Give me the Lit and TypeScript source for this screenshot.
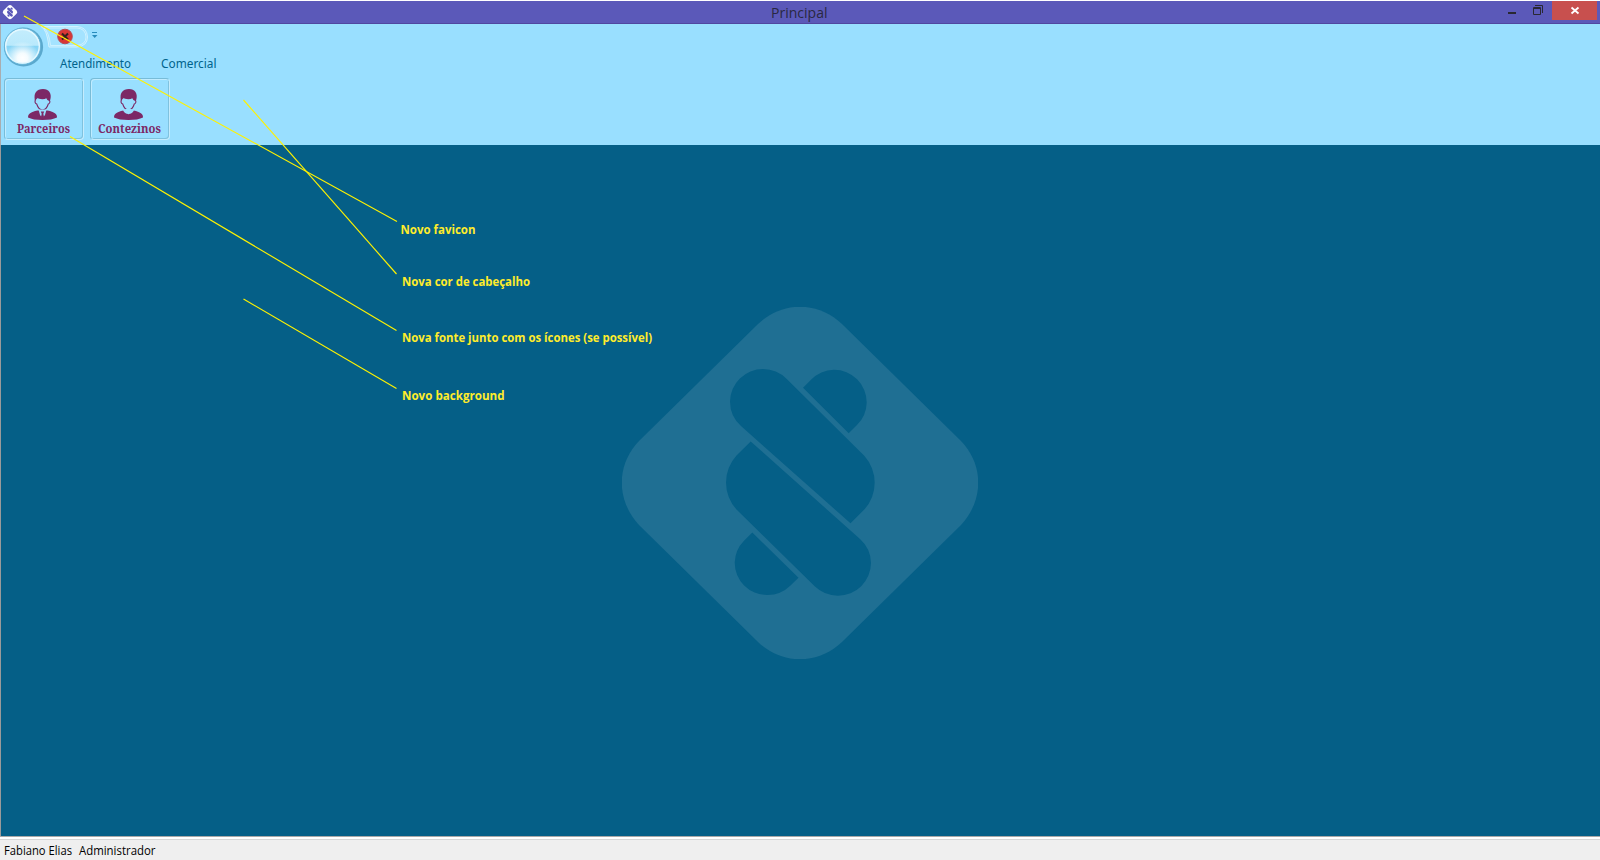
import { LitElement, html, css, svg } from "lit";
import { customElement } from "lit/decorators.js";

const notes = [
  { text: "Novo favicon", x: 400.5, y: 234, w: 75, line: [24, 16, 397, 221.5] },
  { text: "Nova cor de cabeçalho", x: 402, y: 286, w: 128, line: [243.5, 100, 396.5, 274] },
  { text: "Nova fonte junto com os ícones (se possível)", x: 402, y: 342, w: 250, line: [70, 136.5, 396.5, 330.5] },
  { text: "Novo background", x: 402, y: 400, w: 102.5, line: [243.5, 299, 396.5, 388.5] },
];

const brandBars = svg`
  <path d="M203 97.700L211 89.800A33 33 0 0 1 234 79.700A32.700 32.700 0 0 1 266.700 112.400A33 33 0 0 1 257 135L248.700 143.300Z"/>
  <path d="M186.500 88.800L264.500 166A40 40 0 0 1 264.500 219.300L250.500 233.300L141 136A33 33 0 0 1 130 111.500A33 33 0 0 1 163 79A33.500 33.500 0 0 1 186.500 88.800Z"/>
  <path d="M150.700 151.500L136.500 165.500A40 40 0 0 0 136.500 219.500L214.700 296.300A33.500 33.500 0 0 0 238 305.700A33 33 0 0 0 271 273A33 33 0 0 0 260 249Z"/>
  <path d="M152.300 242.500L144 250.700A33 33 0 0 0 134.700 272.500A32.500 32.500 0 0 0 167 305A33 33 0 0 0 190.500 295.500L198.500 287.700Z"/>`;

@customElement("ribbon-button")
class RibbonButton extends LitElement {
  static properties = { label: {}, tie: { type: Boolean }, textWidth: { type: Number } };
  declare label: string;
  declare tie: boolean;
  declare textWidth: number;
  static styles = css`
    :host { display: block; box-sizing: border-box; width: 80px; height: 62px; border: 1px solid #78bcd8; border-right-color: #c5ecfd; border-bottom-color: #c5ecfd; border-radius: 4px; box-shadow: inset 1px 1px 0 #c0ecff, inset -1px -1px 0 #7fc2df; }
    svg { display: block; overflow: visible; }
    .glyph { margin: 10px 0 0 23px; }
    text { font: bold 13px "Noto Serif", "DejaVu Serif Condensed", "DejaVu Serif", serif; fill: #7c2866; }
  `;
  render() {
    return html`
      <svg class="glyph" width="29" height="31" viewBox="0 0 29 31" fill="#7c2866">
        <path d="M0 28.500C0 24.500 2.500 23.200 9.500 21.500H19.500C26.500 23.200 29 24.500 29 28.500Q24 31 14.500 31Q5 31 0 28.500Z"/>
        <path fill="#99dfff" d="M11.500 17H17.500V21.500L14.500 25.500L11.500 21.500Z"/>
        <path d="M6.800 11C5.500 4 8.500 0 15 0C21 0 24 4.500 22.200 11L20 14H9Z"/>
        <path fill="#99dfff" stroke="#7c2866" stroke-width="1.100" d="M7.500 10.500C6.500 13 7.500 14.500 8.700 15C10 19 12 21 14.500 21S19 19 20.300 15C21.500 14.500 22.500 13 21.500 11.500Q19.500 11 18.500 8.500C15 10.500 11.500 9.500 9 8.500Q8.500 9 7.500 10.500Z"/>
        ${this.tie
          ? svg`<path fill="#99dfff" d="M10.500 20.500H18.500L17 26L14.500 29L12 26Z"/><path d="M12.800 22.500H16.200L15.300 24.800L16 28L14.500 29.500L13 28L13.700 24.800Z"/>`
          : svg`<path fill="#99dfff" d="M9 21.300L11.800 20H17.200L20 21.300Q18.500 25 14.500 25T9 21.300Z"/>`}
      </svg>
      <svg width="78" height="18"><text x="38.500" y="13" text-anchor="middle" textLength=${this.textWidth} lengthAdjust="spacingAndGlyphs">${this.label}</text></svg>`;
  }
}

@customElement("app-root")
class AppRoot extends LitElement {
  static styles = css`
    :host { position: relative; display: flex; flex-direction: column; width: 1600px; height: 860px; overflow: hidden; background: #fff; color: #00567f; }
    svg { display: block; }
    * { box-sizing: border-box; }
    .title { display: flex; height: 24px; border-top: 1px solid #fff; border-bottom: 1px solid #5047a0; background: #5b59b9; justify-content: space-between; }
    .head { display: flex; flex-direction: column; height: 121px; background: #99dfff; border-left: 1px solid #a9adb0; }
    .quick { height: 54px; }
    .buttons { display: flex; gap: 6px; padding-left: 3px; }
    .main { flex: 1; background: #055f87; border-left: 1px solid #9a9a9a; display: flex; padding: 162px 0 0 621px; }
    .status { height: 24px; border-top: 1px solid #a9a9a9; background: #efefef; }
    .bevel { height: 3px; background: #fff; border-bottom: 1px solid #d7d7d7; }
    .overlay { position: absolute; inset: 0; }
    .tab { font: 12px "Noto Sans", sans-serif; fill: #00638c; }
    .caption { font: 15px "Open Sans", sans-serif; fill: #292842; }
    .user { font: 12px "Open Sans", sans-serif; fill: #000; }
    .note { font: bold 12.500px "Open Sans", sans-serif; fill: #ffec2b; }
  `;
  render() {
    return html`
      <header class="title">
        <svg width="24" height="22"><g transform="translate(1.900 3.300) scale(.0405)"><path fill="#fff" d="M158 34Q200 0 242 34L361 150Q400 193 361 236L242 352Q200 386 158 352L39 236Q0 193 39 150Z"/><g fill="#5b59b9">${brandBars}</g></g></svg>
        <svg width="60" height="22"><text class="caption" x="1" y="17" textLength="56.500" lengthAdjust="spacingAndGlyphs">Principal</text></svg>
        <svg width="24" height="22"></svg>
      </header>
      <section class="head">
        <svg class="quick" width="300" height="54">
          <defs>
            <linearGradient id="ball" x2="0" y2="1"><stop stop-color="#c4edfd"/><stop offset=".47" stop-color="#b9e9fc"/><stop offset=".5" stop-color="#86d4f5"/><stop offset="1" stop-color="#b0e8ff"/></linearGradient>
            <radialGradient id="shine" cy=".85"><stop stop-color="#fff"/><stop offset=".3" stop-color="#fff" stop-opacity=".9"/><stop offset="1" stop-color="#fff" stop-opacity="0"/></radialGradient>
          </defs>
          <path d="M40 2.500Q46 5 48 23H76Q86.500 22 86.500 13Q86 3 76 2.500Z" fill="#a4e3ff" stroke="#d3f2ff"/>
          <path d="M43 4Q48 8 49.500 21.500H76Q85 20.500 85 13Q84.500 4.500 76 4Z" fill="none" stroke="#e0f7ff" stroke-width=".7"/>
          <circle cx="22.500" cy="23" r="19.600" fill="#5aa9ce"/>
          <circle cx="21.500" cy="22.300" r="18" fill="url(#ball)" stroke="#6bb7da"/>
          <circle cx="21.500" cy="22.300" r="16.800" fill="url(#shine)" stroke="#e4f8ff" stroke-width="1.400"/>
          <circle cx="64" cy="12.500" r="7.300" fill="#d93636" stroke="#b44a55"/>
          <path d="M61 9.500L67 15.500M67 9.500L61 15.500" stroke="#35211d" stroke-width="2"/>
          <path d="M91 8.500H96" stroke="#278bbd"/><path d="M91 11H96.500L93.700 14Z" fill="#278bbd"/>
          <text class="tab" x="59" y="43.500" textLength="71" lengthAdjust="spacingAndGlyphs">Atendimento</text>
          <text class="tab" x="160" y="43.500" textLength="55.500" lengthAdjust="spacingAndGlyphs">Comercial</text>
        </svg>
        <div class="buttons">
          <ribbon-button label="Parceiros" tie .textWidth=${53}></ribbon-button>
          <ribbon-button label="Contezinos" .textWidth=${63}></ribbon-button>
        </div>
      </section>
      <main class="main">
        <svg width="356" height="352" viewBox="22 17 356 352"><path fill="#1f6f93" d="M158 34C182 11 218 11 242 34L361 151C384 175 384 210 361 235L242 352C218 375 182 375 158 352L39 235C16 210 16 175 39 151Z"/><g fill="#055f87">${brandBars}</g></svg>
      </main>
      <footer class="status"><div class="bevel"></div>
        <svg width="200" height="20"><text class="user" x="4" y="15" textLength="68" lengthAdjust="spacingAndGlyphs">Fabiano Elias</text><text class="user" x="79" y="15" textLength="76.500" lengthAdjust="spacingAndGlyphs">Administrador</text></svg>
      </footer>
      <svg class="overlay" width="1600" height="860">
        <path fill="#c8504e" d="M1552 1H1597V20H1552Z"/>
        <path fill="#292832" d="M1508 12H1516V14H1508Z"/>
        <path fill="none" stroke="#292832" d="M1533.500 7.500H1540.500V14.500H1533.500ZM1533 8.500H1541M1535 5.500H1542.500V13"/>
        <path stroke="#fff" stroke-width="1.800" d="M1571.500 7.500L1578.500 13.500M1578.500 7.500L1571.500 13.500"/>
        ${notes.map((n) => svg`<line x1=${n.line[0]} y1=${n.line[1]} x2=${n.line[2]} y2=${n.line[3]} stroke="#fff200" stroke-width="1.150"/><text class="note" x=${n.x} y=${n.y} textLength=${n.w} lengthAdjust="spacingAndGlyphs">${n.text}</text>`)}
      </svg>`;
  }
}
